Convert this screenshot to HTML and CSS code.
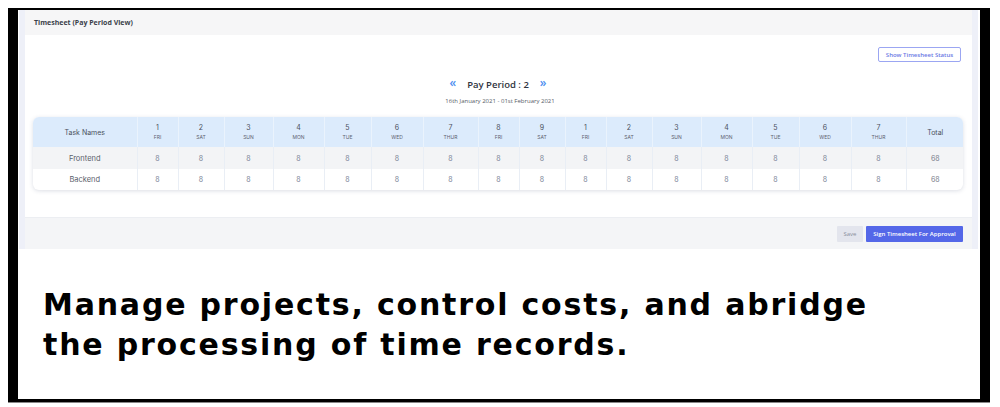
FILE: index.html
```html
<!DOCTYPE html>
<html>
<head>
<meta charset="utf-8">
<link rel="stylesheet" href="styles.css">
</head>
<body>
<div class="frame">
  <div class="app">
    <div class="app-head">Timesheet (Pay Period View)</div>
    <div class="app-body">
      <div class="status-row"><button class="btn-outline">Show Timesheet Status</button></div>
      <div class="period">
        <span class="arrow">&laquo;</span>
        <span class="period-title">Pay Period : 2</span>
        <span class="arrow">&raquo;</span>
      </div>
      <div class="dates">16th January 2021 - 01st February 2021</div>
      <div class="card">
        <table class="sheet">
          <colgroup>
            <col class="c-task"><col class="c-fri"><col class="c-sat"><col class="c-sun"><col class="c-mon"><col class="c-tue"><col class="c-wed"><col class="c-thur"><col class="c-fri"><col class="c-sat"><col class="c-fri"><col class="c-sat"><col class="c-sun"><col class="c-mon"><col class="c-tue"><col class="c-wed"><col class="c-thur"><col class="c-total">
          </colgroup>
          <thead>
            <tr>
              <th class="th-name">Task Names</th>
              <th><span class="dn">1</span><span class="dd">FRI</span></th>
              <th><span class="dn">2</span><span class="dd">SAT</span></th>
              <th><span class="dn">3</span><span class="dd">SUN</span></th>
              <th><span class="dn">4</span><span class="dd">MON</span></th>
              <th><span class="dn">5</span><span class="dd">TUE</span></th>
              <th><span class="dn">6</span><span class="dd">WED</span></th>
              <th><span class="dn">7</span><span class="dd">THUR</span></th>
              <th><span class="dn">8</span><span class="dd">FRI</span></th>
              <th><span class="dn">9</span><span class="dd">SAT</span></th>
              <th><span class="dn">1</span><span class="dd">FRI</span></th>
              <th><span class="dn">2</span><span class="dd">SAT</span></th>
              <th><span class="dn">3</span><span class="dd">SUN</span></th>
              <th><span class="dn">4</span><span class="dd">MON</span></th>
              <th><span class="dn">5</span><span class="dd">TUE</span></th>
              <th><span class="dn">6</span><span class="dd">WED</span></th>
              <th><span class="dn">7</span><span class="dd">THUR</span></th>
              <th class="th-name">Total</th>
            </tr>
          </thead>
          <tbody>
            <tr class="row-alt">
              <td class="name">Frontend</td>
              <td>8</td><td>8</td><td>8</td><td>8</td><td>8</td><td>8</td><td>8</td><td>8</td><td>8</td>
              <td>8</td><td>8</td><td>8</td><td>8</td><td>8</td><td>8</td><td>8</td>
              <td class="total">68</td>
            </tr>
            <tr>
              <td class="name">Backend</td>
              <td>8</td><td>8</td><td>8</td><td>8</td><td>8</td><td>8</td><td>8</td><td>8</td><td>8</td>
              <td>8</td><td>8</td><td>8</td><td>8</td><td>8</td><td>8</td><td>8</td>
              <td class="total">68</td>
            </tr>
          </tbody>
        </table>
      </div>
    </div>
    <div class="app-foot">
      <button class="btn-save">Save</button>
      <button class="btn-sign">Sign Timesheet For Approval</button>
    </div>
  </div>
  <p class="caption">Manage projects, control costs, and abridge<br>the processing of time records.</p>
</div>
</body>
</html>
```
FILE: styles.css
```css
* { box-sizing: border-box; }
html, body { margin: 0; padding: 0; background: #ffffff; }
body { width: 1000px; height: 407px; overflow: hidden; padding: 8px 10px 0 8px; }

.frame {
  width: 982px;
  height: 394px;
  border-style: solid;
  border-color: #000;
  border-width: 2px 10px 3px 10px;
  background: #fff;
  box-shadow: 0 1px 0 #888;
}

.app {
  margin: 0 2px 0 1px;
  height: 239px;
  background: #eef0f8;
  padding: 0 6px;
  display: flex;
  flex-direction: column;
}

.app-head {
  height: 25px;
  background: #f6f6f7;
  display: flex;
  align-items: center;
  padding-left: 9px;
  font-family: "Open Sans", "Liberation Sans", sans-serif;
  font-weight: 700;
  font-size: 7px;
  color: #3a3f4a;
}

.app-body {
  height: 182px;
  background: #fff;
  padding: 12px 11px 0 8px;
  font-family: Inter, "Open Sans", sans-serif;
}

.status-row { display: flex; justify-content: flex-end; height: 15px; }

.btn-outline {
  width: 83px;
  height: 15px;
  padding: 0;
  border: 1px solid #9ba6f2;
  border-radius: 2px;
  background: #fff;
  color: #6b78e4;
  font-family: "Open Sans", sans-serif;
  font-size: 6px;
  font-weight: 600;
}

.period {
  margin-top: 15px;
  display: flex;
  justify-content: center;
  align-items: center;
  gap: 11px;
  height: 14px;
  font-family: "Open Sans", sans-serif;
  padding-left: 2px;
}
.period-title { font-size: 9.5px; font-weight: 600; color: #2f3440; }
.arrow { color: #4f8ff0; font-size: 12px; font-weight: 600; line-height: 1; margin-top: -2px; }

.dates {
  margin-top: 5px;
  text-align: center;
  font-family: "Open Sans", sans-serif;
  font-size: 6px;
  color: #555b66;
  height: 10px;
  line-height: 10px;
  padding-left: 6px;
}

.card {
  margin-top: 11px;
  width: 930px;
  border-radius: 6px;
  overflow: hidden;
  background: #fff;
  box-shadow: 0 1px 4px rgba(60, 70, 110, 0.18);
}

.sheet {
  width: 930px;
  border-collapse: collapse;
  table-layout: fixed;
  font-family: Inter, sans-serif;
  color: #5c6270;
}
.c-task { width: 104px; }
.c-fri { width: 41px; }
.c-sat { width: 46px; }
.c-sun { width: 49px; }
.c-mon { width: 51px; }
.c-tue { width: 47px; }
.c-wed { width: 52px; }
.c-thur { width: 55px; }
.c-total { width: 58px; }

.sheet th {
  height: 30px;
  background: #dcebfc;
  border-left: 1px solid #eaf3fd;
  font-weight: 400;
  text-align: center;
  vertical-align: middle;
  padding: 0;
}
.sheet th:first-child, .sheet td:first-child { border-left: none; }
.th-name { font-size: 7px; color: #4b515c; }
.dn { display: block; font-size: 7px; line-height: 9px; color: #4b515c; }
.dd { display: block; font-size: 5px; line-height: 7px; color: #5c6270; margin-top: 2px; }

.sheet td {
  height: 21px;
  border-left: 1px solid #e9eef5;
  text-align: center;
  vertical-align: middle;
  font-size: 7px;
  color: #7b8599;
  padding: 0;
}
.sheet tbody tr:first-child td { height: 22px; }
.row-alt td { background: #f3f4f6; }
.sheet td.name { font-size: 7.5px; color: #5a606b; }
.sheet td.total { color: #7a808c; }

.app-foot {
  height: 32px;
  background: #f4f5f7;
  border-top: 1px solid #eceef2;
  display: flex;
  justify-content: flex-end;
  align-items: center;
  gap: 3px;
  padding-right: 9px;
  padding-top: 1px;
}
.btn-save {
  width: 26px;
  height: 16px;
  padding: 0;
  border: none;
  border-radius: 1px;
  background: #e3e5ed;
  color: #8a8f9c;
  font-family: "Open Sans", sans-serif;
  font-size: 6px;
}
.btn-sign {
  width: 97px;
  height: 16px;
  padding: 0;
  border: none;
  border-radius: 1px;
  background: #5467e8;
  color: #fff;
  font-family: "Open Sans", sans-serif;
  font-size: 6px;
  font-weight: 600;
}

.caption {
  margin: 36px 0 0 25px;
  font-family: "DejaVu Sans", "Open Sans", sans-serif;
  font-weight: 700;
  font-size: 30px;
  line-height: 40px;
  color: #000;
  letter-spacing: 1.8px;
}
```
